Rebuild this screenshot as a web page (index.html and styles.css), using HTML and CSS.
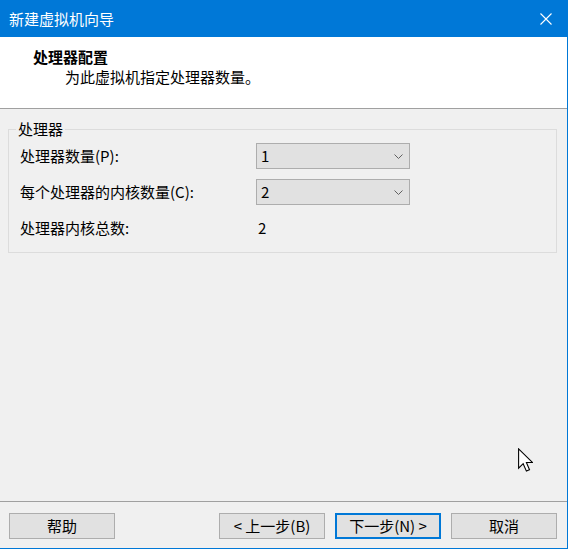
FILE: index.html
```html
<!DOCTYPE html>
<html lang="zh-CN">
<head>
    <meta charset="UTF-8">
    <title>新建虚拟机向导</title>
    <link rel="stylesheet" href="styles.css">
</head>
<body>
    <div class="wizard">
        <div class="title-bar">
            <span class="title-text">新建虚拟机向导</span>
            <button class="close-btn" aria-label="关闭">
                <svg width="12" height="12" viewBox="0 0 12 12"><path d="M0.5 0.5 L11.5 11.5 M11.5 0.5 L0.5 11.5" stroke="#fff" stroke-width="1.1" fill="none"/></svg>
            </button>
        </div>

        <div class="page-header">
            <div class="page-title">处理器配置</div>
            <div class="page-desc">为此虚拟机指定处理器数量。</div>
        </div>

        <div class="page-body">
            <fieldset class="group">
                <legend>处理器</legend>
                <div class="form-row">
                    <label class="form-label">处理器数量(P):</label>
                    <div class="combo">
                        <span>1</span>
                        <svg width="9" height="5" viewBox="0 0 9 5"><path d="M0.5 0.5 L4.5 4.5 L8.5 0.5" stroke="#606060" fill="none"/></svg>
                    </div>
                </div>
                <div class="form-row">
                    <label class="form-label">每个处理器的内核数量(C):</label>
                    <div class="combo">
                        <span>2</span>
                        <svg width="9" height="5" viewBox="0 0 9 5"><path d="M0.5 0.5 L4.5 4.5 L8.5 0.5" stroke="#606060" fill="none"/></svg>
                    </div>
                </div>
                <div class="form-row">
                    <span class="form-label">处理器内核总数:</span>
                    <span class="form-value">2</span>
                </div>
            </fieldset>
        </div>

        <div class="page-footer">
            <button class="wiz-btn help-btn">帮助</button>
            <button class="wiz-btn">&lt; 上一步(B)</button>
            <button class="wiz-btn default">下一步(N) &gt;</button>
            <button class="wiz-btn">取消</button>
        </div>

        <svg class="cursor" width="15" height="24" viewBox="0 0 12.5 19.5">
            <path d="M0.5 0.5 L0.5 16.5 L4.3 12.8 L7 19 L9.6 17.9 L7 11.8 L12 11.8 Z" fill="#fff" stroke="#000" stroke-width="0.9" stroke-linejoin="miter"/>
        </svg>
    </div>
</body>
</html>
```

FILE: styles.css
```css
body {
    margin: 0;
    background: #ffffff;
    font-family: "Noto Sans CJK SC", "Noto Sans", sans-serif;
    font-size: 15px;
    color: #000;
}

.wizard {
    position: relative;
    width: 567px;
    height: 548px;
    border-right: 1px solid #0078d7;
    border-bottom: 1px solid #0078d7;
    display: flex;
    flex-direction: column;
    background: #f0f0f0;
}

.title-bar {
    height: 37px;
    background: #0078d7;
    display: flex;
    align-items: center;
    justify-content: space-between;
    padding-left: 9px;
    flex-shrink: 0;
}

.title-text {
    color: #fff;
    font-size: 15px;
    line-height: 20px;
}

.close-btn {
    width: 46px;
    height: 37px;
    border: none;
    background: transparent;
    display: flex;
    align-items: center;
    justify-content: center;
    padding: 0;
    margin-right: -2px;
}

.page-header {
    height: 72px;
    box-sizing: border-box;
    background: #fff;
    border-bottom: 1px solid #a0a0a0;
    padding: 10px 0 0 33px;
    flex-shrink: 0;
}

.page-title {
    font-weight: bold;
    line-height: 20px;
}

.page-desc {
    line-height: 20px;
    padding-left: 32px;
}

.page-body {
    flex: 1;
    padding: 10px 0 0 8px;
}

.group {
    margin: 0;
    padding: 4px 0 11px 0;
    width: 549px;
    box-sizing: border-box;
    border: 1px solid #dcdcdc;
    display: flex;
    flex-direction: column;
    gap: 10px;
}

.group legend {
    margin-left: 7px;
    padding: 0 2px;
    line-height: 20px;
}

.form-row {
    display: flex;
    align-items: center;
    height: 26px;
    padding-left: 11px;
}

.form-label {
    width: 236px;
    line-height: 20px;
}

.form-value {
    padding-left: 2px;
    line-height: 20px;
}

.combo {
    width: 154px;
    height: 26px;
    box-sizing: border-box;
    border: 1px solid #adadad;
    background: #e1e1e1;
    display: flex;
    align-items: center;
    justify-content: space-between;
    padding: 0 6px 0 4px;
    line-height: 20px;
}

.page-footer {
    height: 47px;
    box-sizing: border-box;
    border-top: 1px solid #a0a0a0;
    display: flex;
    align-items: flex-start;
    gap: 10px;
    padding: 11px 10px 0 9px;
    flex-shrink: 0;
}

.wiz-btn {
    width: 106px;
    height: 26px;
    box-sizing: border-box;
    border: 1px solid #adadad;
    background: #e1e1e1;
    font-family: inherit;
    font-size: 15px;
    color: #000;
    padding: 0;
    line-height: 20px;
}

.wiz-btn.default {
    border: 2px solid #0078d7;
}

.help-btn {
    margin-right: auto;
}

.cursor {
    position: absolute;
    left: 518px;
    top: 448px;
}
```
